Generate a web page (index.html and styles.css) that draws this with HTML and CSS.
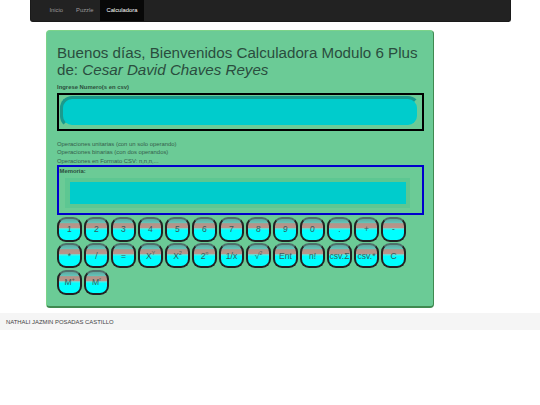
FILE: index.html
```html
<!DOCTYPE html>
<html lang="es">
<head>
    <meta charset="UTF-8">
    <title>Calculadora</title>
    <link rel="stylesheet" href="styles.css">
</head>
<body>
    <nav class="navbar">
        <a href="#" class="nav-link">Inicio</a>
        <a href="#" class="nav-link">Puzzle</a>
        <a href="#" class="nav-link active">Calculadora</a>
    </nav>

    <div class="panel">
        <h1 class="title">Buenos días, Bienvenidos Calculadora Modulo 6 Plus de: <em>Cesar David Chaves Reyes</em></h1>
        <label class="input-label">Ingrese Numero(s en csv)</label>
        <div class="input-box">
            <div class="input-field"></div>
        </div>

        <div class="notes">
            <p>Operaciones unitarias (con un solo operando)</p>
            <p>Operaciones binarias (con dos operandos)</p>
            <p>Operaciones en Formato CSV: n,n,n,...</p>
        </div>

        <div class="memory-box">
            <label class="input-label">Memoria:</label>
            <div class="memory-field"></div>
        </div>

        <div class="keys">
            <button>1</button>
            <button>2</button>
            <button>3</button>
            <button>4</button>
            <button>5</button>
            <button>6</button>
            <button>7</button>
            <button>8</button>
            <button>9</button>
            <button>0</button>
            <button>.</button>
            <button>+</button>
            <button>-</button>
            <button>*</button>
            <button>/</button>
            <button>=</button>
            <button>X<sup>Y</sup></button>
            <button>X<sup>2</sup></button>
            <button>2<sup>n</sup></button>
            <button>1/x</button>
            <button>√<sup>2</sup></button>
            <button>Ent</button>
            <button>n!</button>
            <button>csv.Σ</button>
            <button>csv.*</button>
            <button>C</button>
            <button>M<sup>+</sup></button>
            <button>M<sup>r</sup></button>
        </div>
    </div>

    <footer class="footer">NATHALI JAZMIN POSADAS CASTILLO</footer>
</body>
</html>
```

FILE: styles.css
```css
* {
    box-sizing: border-box;
}
body {
    margin: 0;
    font-family: "Liberation Sans", Arial, sans-serif;
    color: #2b4f3c;
    background: #fff;
}
.navbar {
    display: flex;
    height: 22px;
    margin: 0 29.5px;
    padding-left: 12.5px;
    background: #222;
    border: 1px solid #1a1a1a;
    border-top: 0;
    border-radius: 0 0 3px 3px;
}
.nav-link {
    padding: 0 6.5px;
    line-height: 21px;
    font-size: 5.8px;
    color: #9d9d9d;
    text-decoration: none;
}
.active {
    color: #fff;
    background: #080808;
}
.panel {
    width: 388px;
    height: 278px;
    margin: 8px 0 0 46px;
    padding: 13px 9.5px 0 10px;
    background: #6bcb96;
    border: 1px solid #7cd389;
    border-right-color: #3f8a50;
    border-bottom: 2px solid #3f8a50;
    border-radius: 4px;
}
.title {
    margin: 0 0 6px;
    font-size: 15.17px;
    line-height: 17px;
    font-weight: 400;
    color: #2a4d3e;
}
.input-label {
    display: block;
    font-size: 5.9px;
    line-height: 7px;
    font-weight: 700;
    color: #2b4f3c;
}
.input-box {
    height: 38px;
    margin-top: 2px;
    padding: 1px 2px 1px 1px;
    border: 2px solid #000;
}
.input-field {
    height: 100%;
    background: #00cccc;
    border: 3px solid #6bcb96;
    border-top-color: #1a9a8e;
    border-left-color: #1a9a8e;
    border-radius: 12px;
}
.notes {
    margin-top: 9px;
    font-size: 5.9px;
    line-height: 8.3px;
    color: #35604c;
}
.notes p {
    margin: 0;
}
.memory-box {
    height: 50px;
    padding: 1px 4px 0 0.5px;
    border: 2px solid #0000cc;
}
.memory-field {
    height: 30px;
    margin: 3px 8px 0 5.5px;
    background: #00cccc;
    border: 4px solid #5dc792;
    border-left-width: 5px;
}
.keys {
    display: flex;
    flex-wrap: wrap;
    gap: 1.5px 2px;
    margin-top: 2px;
    width: 355px;
}
.keys button {
    width: 25px;
    height: 25px;
    padding: 0;
    font-family: "Liberation Sans", Arial, sans-serif;
    font-size: 8.6px;
    color: #3a5a5a;
    background: linear-gradient(#5fa89f 0, #62c4b9 18%, #b39488 22%, #b9948a 42%, #5fe6df 46%, #00ffff 54%);
    border: 2px solid #222;
    border-top-color: #4f6f6a;
    border-radius: 9px;
    overflow: hidden;
}
.keys sup {
    font-size: 5px;
    line-height: 0;
}
.footer {
    height: 17px;
    margin-top: 5px;
    padding-left: 6px;
    font-size: 5.9px;
    line-height: 18px;
    color: #444;
    background: #f5f5f5;
}
```
